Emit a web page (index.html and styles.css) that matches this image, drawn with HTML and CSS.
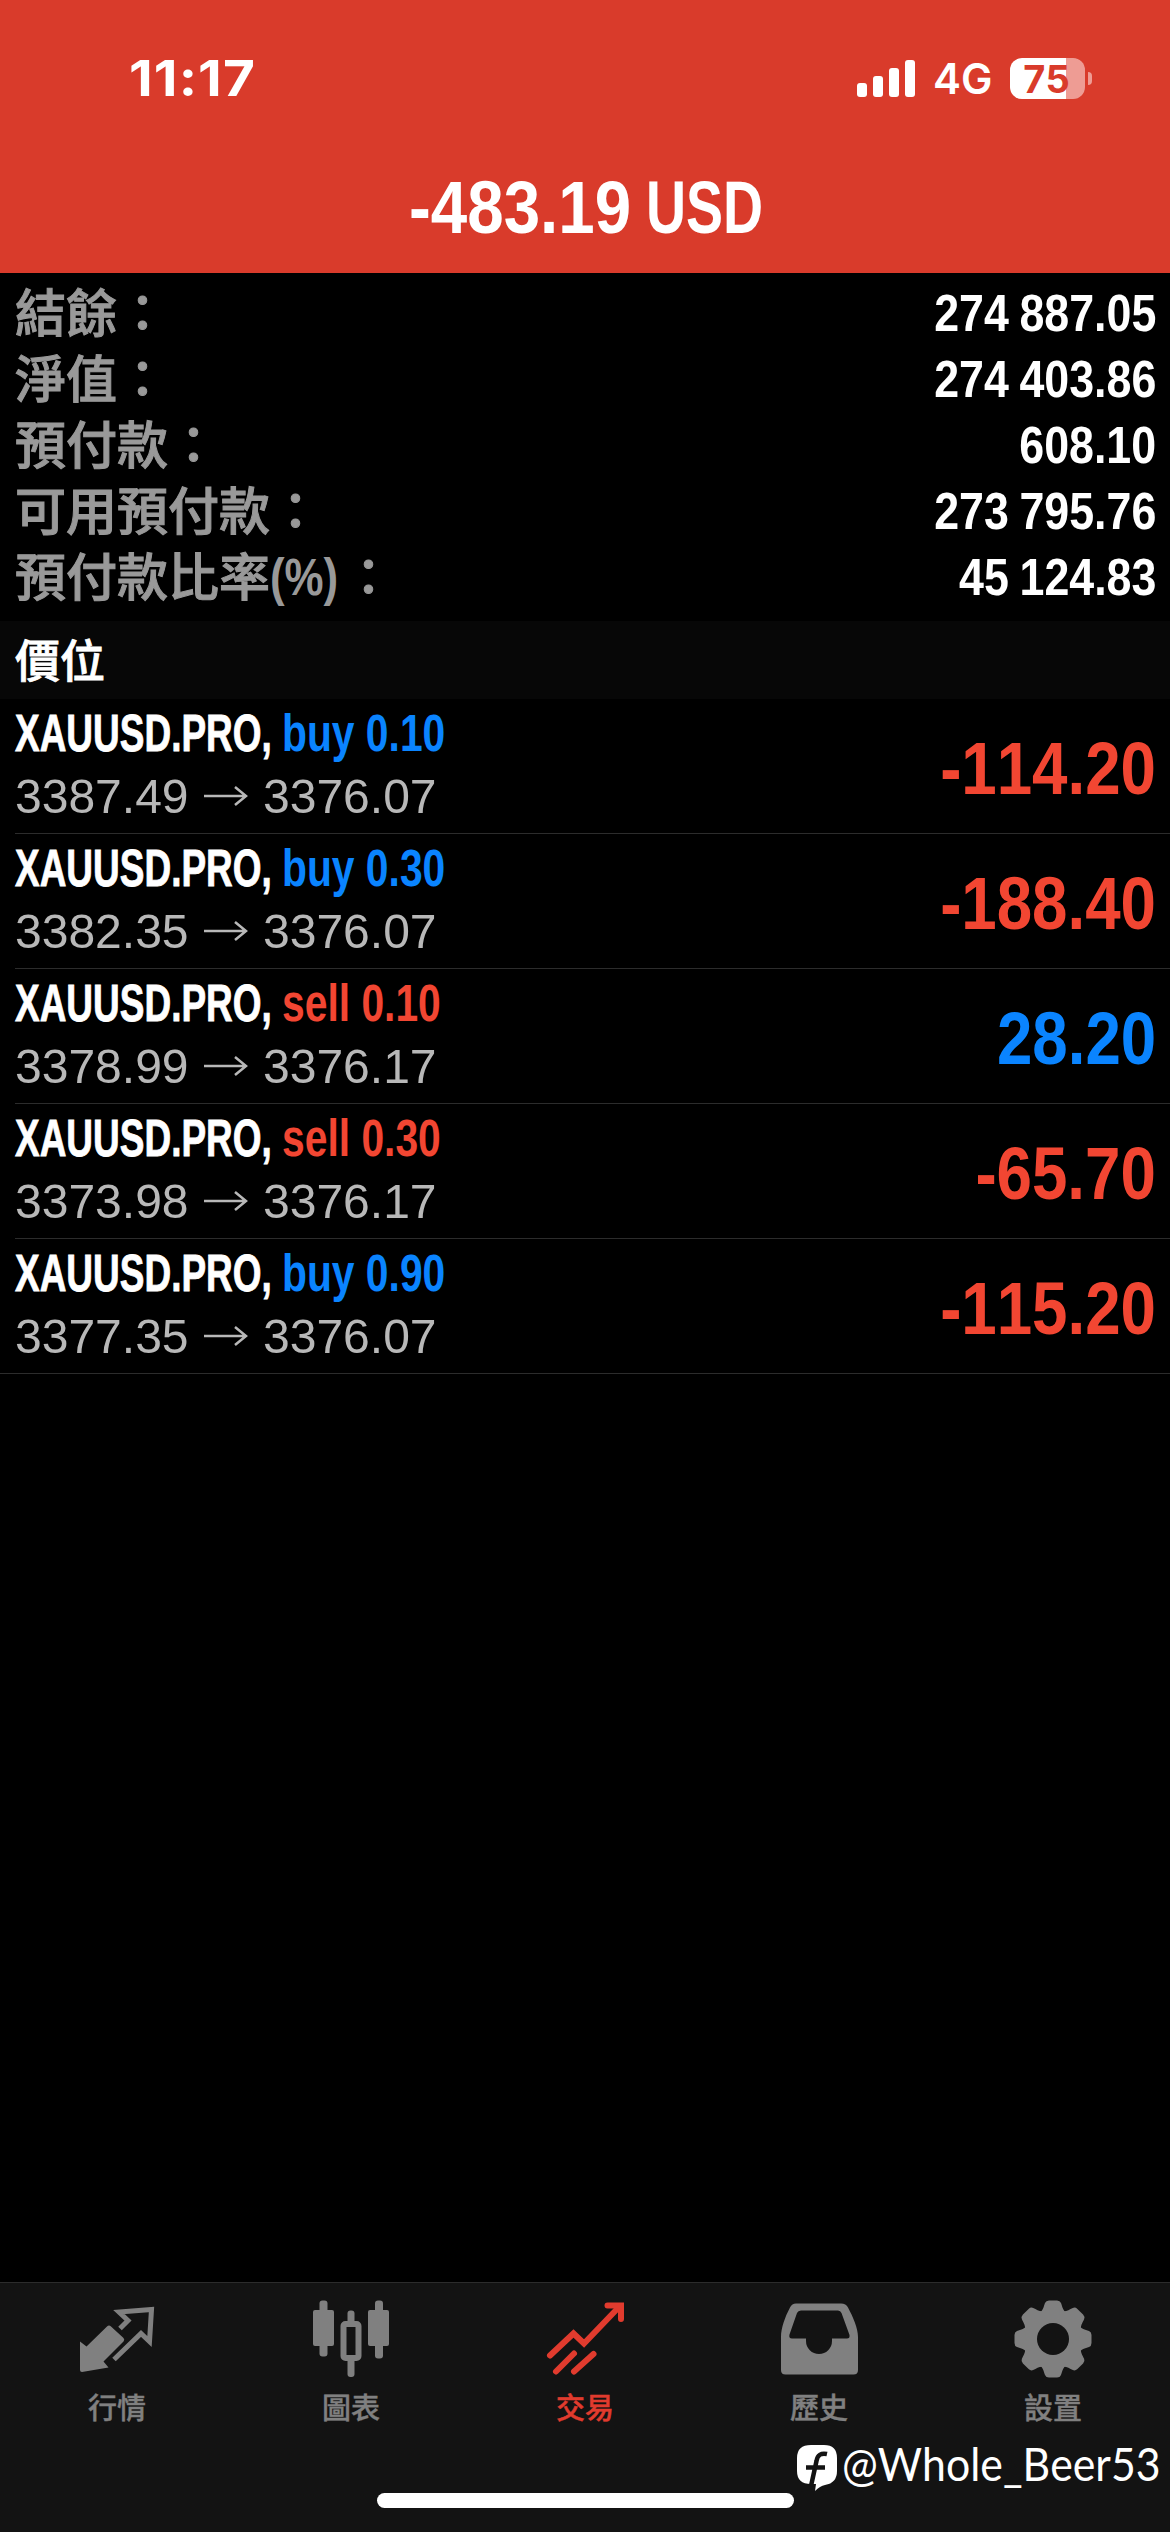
FILE: index.html
```html
<!DOCTYPE html>
<html lang="zh-Hant">
<head>
    <meta charset="UTF-8">
    <meta name="viewport" content="width=device-width, initial-scale=1.0">
    <title>交易</title>
    <link rel="stylesheet" href="styles.css">
</head>
<body>
    <div class="screen">

        <!-- Header -->
        <header class="header">
            <div class="status-bar">
                <div class="time">11:17</div>
                <div class="status-icons">
                    <svg class="signal" width="58" height="37" viewBox="0 0 58 37" fill="#fff">
                        <rect x="0" y="23" width="10" height="14" rx="3"/>
                        <rect x="16" y="16" width="10" height="21" rx="3"/>
                        <rect x="32" y="8" width="10" height="29" rx="3"/>
                        <rect x="48" y="0" width="10" height="37" rx="3"/>
                    </svg>
                    <span class="network">4G</span>
                    <div class="battery">75</div>
                    <div class="battery-tip"></div>
                </div>
            </div>
            <h1 class="total"><span class="amount">-483.19</span> <span class="currency">USD</span></h1>
        </header>

        <!-- Account summary -->
        <section class="summary">
            <div class="summary-row"><span class="label">結餘：</span><span class="value">274 887.05</span></div>
            <div class="summary-row"><span class="label">淨值：</span><span class="value">274 403.86</span></div>
            <div class="summary-row"><span class="label">預付款：</span><span class="value">608.10</span></div>
            <div class="summary-row"><span class="label">可用預付款：</span><span class="value">273 795.76</span></div>
            <div class="summary-row"><span class="label">預付款比率<span class="percent">(%)</span>：</span><span class="value">45 124.83</span></div>
        </section>

        <div class="section-title">價位</div>

        <!-- Open positions -->
        <main class="positions">
            <div class="position">
                <div class="info">
                    <div class="order"><span class="symbol">XAUUSD.PRO,</span><span class="side blue">buy 0.10</span></div>
                    <div class="prices"><span class="price">3387.49</span><svg class="arrow" viewBox="0 0 44 20"><path d="M0 10H42M31 1L42 10L31 19"/></svg><span class="price">3376.07</span></div>
                </div>
                <div class="profit red">-114.20</div>
            </div>
            <div class="position">
                <div class="info">
                    <div class="order"><span class="symbol">XAUUSD.PRO,</span><span class="side blue">buy 0.30</span></div>
                    <div class="prices"><span class="price">3382.35</span><svg class="arrow" viewBox="0 0 44 20"><path d="M0 10H42M31 1L42 10L31 19"/></svg><span class="price">3376.07</span></div>
                </div>
                <div class="profit red">-188.40</div>
            </div>
            <div class="position">
                <div class="info">
                    <div class="order"><span class="symbol">XAUUSD.PRO,</span><span class="side red">sell 0.10</span></div>
                    <div class="prices"><span class="price">3378.99</span><svg class="arrow" viewBox="0 0 44 20"><path d="M0 10H42M31 1L42 10L31 19"/></svg><span class="price">3376.17</span></div>
                </div>
                <div class="profit blue">28.20</div>
            </div>
            <div class="position">
                <div class="info">
                    <div class="order"><span class="symbol">XAUUSD.PRO,</span><span class="side red">sell 0.30</span></div>
                    <div class="prices"><span class="price">3373.98</span><svg class="arrow" viewBox="0 0 44 20"><path d="M0 10H42M31 1L42 10L31 19"/></svg><span class="price">3376.17</span></div>
                </div>
                <div class="profit red">-65.70</div>
            </div>
            <div class="position">
                <div class="info">
                    <div class="order"><span class="symbol">XAUUSD.PRO,</span><span class="side blue">buy 0.90</span></div>
                    <div class="prices"><span class="price">3377.35</span><svg class="arrow" viewBox="0 0 44 20"><path d="M0 10H42M31 1L42 10L31 19"/></svg><span class="price">3376.07</span></div>
                </div>
                <div class="profit red">-115.20</div>
            </div>
        </main>

        <!-- Bottom tabs -->
        <nav class="tab-bar">
            <div class="tab">
                <svg class="tab-icon" viewBox="0 0 78 78">
                    <path fill="currentColor" d="M2 41.500L8.500 46.500L29 26.500Q31 24.500 33 26.500L45.500 38Q47 39.500 45.500 41.500L25.500 61.500L30.500 67.500L4 72Q2 72 2 70Z"/>
                    <path fill="none" stroke="currentColor" stroke-width="5" d="M42 28.500L50 20.500L41 12L73.500 9.500L71.500 41.500L63 33.500L36 59.500"/>
                </svg>
                <span>行情</span>
            </div>
            <div class="tab">
                <svg class="tab-icon" viewBox="0 0 78 78" fill="currentColor">
                    <rect x="7.500" y="0.500" width="8" height="56" rx="3"/>
                    <rect x="1" y="10" width="21" height="36" rx="2"/>
                    <rect x="63" y="0.500" width="8" height="58" rx="3"/>
                    <rect x="56" y="10" width="21" height="36" rx="2"/>
                    <rect x="35.500" y="10.500" width="7" height="15" rx="3"/>
                    <rect x="35.500" y="56" width="7" height="21" rx="3"/>
                    <rect x="31.500" y="24" width="15" height="34" rx="2" fill="none" stroke="currentColor" stroke-width="6"/>
                </svg>
                <span>圖表</span>
            </div>
            <div class="tab active">
                <svg class="tab-icon" viewBox="0 0 78 78" fill="none" stroke="currentColor" stroke-width="6" stroke-linecap="round">
                    <path d="M4 55.500L27.500 33.500L38 43.500L73 7"/>
                    <path d="M61.500 5.500H75V19" stroke-linejoin="miter"/>
                    <path d="M10 71.500L28 53.500M28 71.500L47.500 54"/>
                </svg>
                <span>交易</span>
            </div>
            <div class="tab">
                <svg class="tab-icon" viewBox="0 0 78 78" fill="currentColor">
                    <path fill-rule="evenodd" d="M16 3.500H61Q66 3.500 68 7.500C73 17 78 28 78 37V70Q78 74.500 73.500 74.500H5.500Q1 74.500 1 70V37C1 28 5 17 10 7.500Q12 3.500 16 3.500ZM21 10.500Q18 10.500 17 13L9.500 34.500Q8.500 38.500 12 38.500H26V41A13 13 0 0 0 52 41V38.500H67Q70 38.500 69.500 35L61.500 13Q60.500 10.500 58 10.500Z"/>
                </svg>
                <span>歷史</span>
            </div>
            <div class="tab">
                <svg class="tab-icon" viewBox="-39 -39 78 78">
                    <g fill="currentColor">
                        <path id="tooth" d="M-14 -26C-10 -28 -9.500 -32 -8 -36Q-7 -38.500 -4 -38.500H4Q7 -38.500 8 -36C9.500 -32 10 -28 14 -26L0 0Z"/>
                        <use href="#tooth" transform="rotate(45)"/>
                        <use href="#tooth" transform="rotate(90)"/>
                        <use href="#tooth" transform="rotate(135)"/>
                        <use href="#tooth" transform="rotate(180)"/>
                        <use href="#tooth" transform="rotate(225)"/>
                        <use href="#tooth" transform="rotate(270)"/>
                        <use href="#tooth" transform="rotate(315)"/>
                        <circle r="29"/>
                    </g>
                    <circle r="16" fill="#131313"/>
                </svg>
                <span>設置</span>
            </div>
            <div class="home-indicator"></div>
            <div class="watermark">
                <svg width="41" height="47" viewBox="0 0 41 47">
                    <path fill="#fff" d="M14 0H27Q40 0 40 13V26Q40 38 28 40Q23 41 18 46L19 39H14Q0 39 0 26V13Q0 0 14 0Z"/>
                    <path fill="none" stroke="#131313" stroke-width="4.500" d="M30 9Q21 7 19.500 16L14 41M9 22.500H28"/>
                </svg>
                <span class="handle">@Whole_Beer53</span>
            </div>
        </nav>
    </div>
</body>
</html>
```
FILE: styles.css
```css
* {
    box-sizing: border-box;
}
body {
    margin: 0;
    background: #000;
    color: #fff;
    font-family: "Liberation Sans", "Noto Sans CJK TC", sans-serif;
    font-kerning: none;
}
.screen {
    width: 1170px;
    height: 2532px;
    display: flex;
    flex-direction: column;
    overflow: hidden;
}
.red { color: #f24632; }
.blue { color: #0a84ff; }

/* Header */
.header {
    height: 273px;
    background: #d93b2b;
}
.status-bar {
    height: 156px;
    padding: 0 78px 0 129px;
    display: flex;
    align-items: center;
    justify-content: space-between;
    font-family: Inter, sans-serif;
}
.time {
    font-size: 50px;
    font-weight: 700;
    line-height: 60px;
    letter-spacing: 1px;
    transform: scaleX(1.1);
    transform-origin: left;
}
.status-icons {
    display: flex;
    align-items: center;
}
.network {
    width: 60px;
    margin: 2px 0 0 18px;
    font-size: 42px;
    font-weight: 600;
    line-height: 42px;
}
.battery {
    width: 75px;
    height: 41px;
    margin-left: 17px;
    padding-right: 2px;
    border-radius: 12px;
    background: linear-gradient(90deg, #fff 56px, #ee9c94 56px);
    color: #d93b2b;
    font-size: 38px;
    font-weight: 700;
    line-height: 42px;
    text-align: center;
}
.battery-tip {
    width: 4px;
    height: 13px;
    margin-left: 3px;
    border-radius: 0 4px 4px 0;
    background: #ee9c94;
}
.total {
    margin: 0;
    display: flex;
    justify-content: center;
    gap: 15px;
    font-size: 74px;
    line-height: 104px;
    white-space: nowrap;
}
.amount {
    width: 222px;
    transform: scaleX(0.885);
    transform-origin: left;
}
.currency {
    width: 116px;
    transform: scaleX(0.75);
    transform-origin: left;
}

/* Summary */
.summary {
    height: 348px;
    padding: 7px 14px 0 15px;
}
.summary-row {
    height: 66px;
    display: flex;
    justify-content: space-between;
    line-height: 66px;
}
.label {
    color: #999;
    font-family: "Noto Sans CJK TC", sans-serif;
    font-size: 51px;
    font-weight: 500;
    line-height: 61px;
    -webkit-text-stroke: 1px #999;
}
.percent {
    display: inline-block;
    width: 73px;
    font-family: "Liberation Sans", sans-serif;
    font-weight: 700;
    line-height: 50px;
    white-space: nowrap;
    transform: translateY(-1px) scaleX(0.86);
    transform-origin: left;
    -webkit-text-stroke: 0;
}
.value {
    font-size: 52px;
    font-weight: 700;
    word-spacing: -2px;
    transform: scaleX(0.86);
    transform-origin: right;
}
.section-title {
    height: 78px;
    padding-left: 15px;
    background: #070707;
    font-family: "Noto Sans CJK TC", sans-serif;
    font-size: 45px;
    font-weight: 500;
    line-height: 75px;
    -webkit-text-stroke: 0.8px #fff;
}

/* Positions */
.positions {
    flex: 1;
}
.position {
    height: 135px;
    margin-left: 15px;
    padding-right: 14px;
    display: flex;
    justify-content: space-between;
    border-bottom: 1px solid #2c2c2c;
}
.position:last-child {
    margin-left: 0;
    padding-left: 15px;
}
.order {
    height: 66px;
    display: flex;
    font-size: 51px;
    font-weight: 700;
    line-height: 70px;
    white-space: nowrap;
}
.symbol {
    width: 267px;
    transform: scaleX(0.725);
    transform-origin: left;
    -webkit-text-stroke: 0.8px #fff;
}
.side {
    transform: scaleX(0.8);
    transform-origin: left;
}
.prices {
    display: flex;
    align-items: center;
    color: #b8b8b8;
    font-size: 49px;
    line-height: 62px;
}
.price {
    width: 173px;
    transform: scaleX(0.98);
    transform-origin: left;
}
.arrow {
    width: 44px;
    height: 20px;
    margin: 0 15px 0 16px;
    fill: none;
    stroke: currentColor;
    stroke-width: 2.5;
}
.profit {
    font-size: 74px;
    font-weight: 700;
    line-height: 139px;
    transform: scaleX(0.86);
    transform-origin: right;
}

/* Tab bar */
.tab-bar {
    position: relative;
    height: 250px;
    padding-top: 17px;
    display: flex;
    align-items: flex-start;
    border-top: 1px solid #2c2c2c;
    background: #131313;
}
.tab {
    flex: 1;
    display: flex;
    flex-direction: column;
    align-items: center;
    color: #808080;
    font-family: "Noto Sans CJK TC", sans-serif;
    font-size: 29px;
    font-weight: 500;
    line-height: 40px;
    -webkit-text-stroke: 0.4px currentColor;
}
.tab-icon {
    width: 78px;
    height: 78px;
    margin-bottom: 8px;
}
.active {
    color: #e13b2e;
}
.home-indicator {
    position: absolute;
    left: 377px;
    bottom: 24px;
    width: 417px;
    height: 15px;
    border-radius: 8px;
    background: #fff;
}
.watermark {
    position: absolute;
    right: 11px;
    bottom: 40px;
    display: flex;
    align-items: flex-end;
    gap: 4px;
}
.handle {
    width: 317px;
    font-family: Lato, sans-serif;
    font-size: 46px;
    line-height: 56px;
    white-space: nowrap;
    transform: scaleX(0.93);
    transform-origin: left;
}
```
